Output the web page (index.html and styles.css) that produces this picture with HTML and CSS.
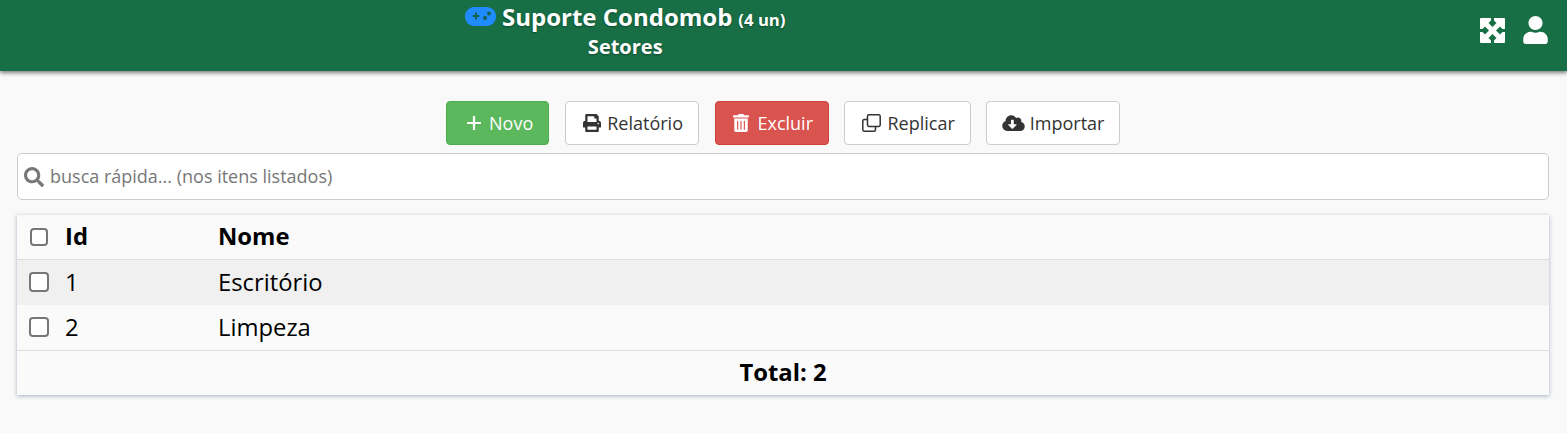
FILE: index.html
```html
<!DOCTYPE html>
<html lang="pt-BR">
<head>
<meta charset="utf-8">
<title>Setores</title>
<link rel="stylesheet" href="styles.css">
</head>
<body>
<header class="topbar">
  <div class="brand">
    <div class="brand-line">
      <svg class="pad" viewBox="0 0 31 19"><rect width="31" height="19" rx="9" fill="#1f8bff"/><path d="M7.600 8h2.400V5.500h2V8h2.400v2H12v2.500h-2V10H7.600z" fill="#17604c"/><circle cx="20" cy="11" r="2" fill="#17604c"/><circle cx="24" cy="6.500" r="2" fill="#17604c"/></svg>
      <span class="brand-name">Suporte Condomob</span>
      <span class="brand-unit">(4 un)</span>
    </div>
    <div class="brand-sub">Setores</div>
  </div>
  <div class="top-icons">
    <svg class="ico-expand" viewBox="0 0 25 25"><rect width="25" height="25" rx="1" fill="#fff"/><g fill="#186f46"><path d="M11 0h3v2.500l2.500 2.500-4 4-4-4L11 2.500z"/><path transform="rotate(90 12.500 12.500)" d="M11 0h3v2.500l2.500 2.500-4 4-4-4L11 2.500z"/><path transform="rotate(180 12.500 12.500)" d="M11 0h3v2.500l2.500 2.500-4 4-4-4L11 2.500z"/><path transform="rotate(270 12.500 12.500)" d="M11 0h3v2.500l2.500 2.500-4 4-4-4L11 2.500z"/></g></svg>
    <svg class="ico-user" viewBox="0 0 448 512"><path fill="#fff" d="M224 256c70.700 0 128-57.300 128-128S294.700 0 224 0 96 57.300 96 128s57.300 128 128 128zm89.600 32h-16.700c-22.200 10.200-46.900 16-72.900 16s-50.600-5.800-72.900-16h-16.700C60.200 288 0 348.200 0 422.400V464c0 26.500 21.500 48 48 48h352c26.500 0 48-21.500 48-48v-41.600c0-74.200-60.200-134.400-134.400-134.400z"/></svg>
  </div>
</header>

<main class="content">
  <div class="toolbar">
    <button class="btn btn-green" type="button">
      <svg class="ico ico-plus" viewBox="0 0 16 16"><path d="M8 1v14M1 8h14" stroke="#fff" stroke-width="2.200" fill="none"/></svg>Novo
    </button>
    <button class="btn btn-report" type="button">
      <svg class="ico" viewBox="0 0 512 512"><path fill="#333" d="M448 192V77.250c0-8.490-3.370-16.620-9.370-22.630L393.370 9.370c-6-6-14.140-9.370-22.630-9.370H96C78.330 0 64 14.330 64 32v160c-35.350 0-64 28.650-64 64v112c0 8.840 7.160 16 16 16h48v96c0 17.670 14.330 32 32 32h320c17.670 0 32-14.330 32-32v-96h48c8.840 0 16-7.160 16-16V256c0-35.350-28.650-64-64-64zm-64 256H128v-96h256v96zm0-224H128V64h192v48c0 8.840 7.160 16 16 16h48v96zm48 72c-13.250 0-24-10.750-24-24 0-13.270 10.750-24 24-24s24 10.730 24 24c0 13.250-10.750 24-24 24z"/></svg>Relatório
    </button>
    <button class="btn btn-red" type="button">
      <svg class="ico ico-trash" viewBox="0 0 448 512"><path fill="#fff" d="M32 464a48 48 0 0 0 48 48h288a48 48 0 0 0 48-48V128H32zm272-256a16 16 0 0 1 32 0v224a16 16 0 0 1-32 0zm-96 0a16 16 0 0 1 32 0v224a16 16 0 0 1-32 0zm-96 0a16 16 0 0 1 32 0v224a16 16 0 0 1-32 0zM432 32H312l-9.400-18.700A24 24 0 0 0 281.100 0H166.800a23.720 23.720 0 0 0-21.400 13.300L136 32H16A16 16 0 0 0 0 48v32a16 16 0 0 0 16 16h416a16 16 0 0 0 16-16V48a16 16 0 0 0-16-16z"/></svg>Excluir
    </button>
    <button class="btn btn-tight" type="button">
      <svg class="ico ico-copy" viewBox="0 0 19 18"><path fill="none" stroke="#333" stroke-width="1.500" d="M7 .8h9.700a1.500 1.500 0 0 1 1.500 1.500V11a1.500 1.500 0 0 1-1.500 1.500H7A1.500 1.500 0 0 1 5.500 11V2.300A1.500 1.500 0 0 1 7 .8z"/><path fill="none" stroke="#333" stroke-width="1.500" d="M5.500 5.500H2.300A1.500 1.500 0 0 0 .8 7v8.700a1.500 1.500 0 0 0 1.500 1.500H12a1.500 1.500 0 0 0 1.500-1.500v-3.200"/></svg>Replicar
    </button>
    <button class="btn btn-tight btn-import" type="button">
      <svg class="ico ico-cloud" viewBox="0 0 640 512"><path fill="#333" d="M537.600 226.600c4.100-10.700 6.400-22.400 6.400-34.600 0-53-43-96-96-96-19.700 0-38.100 6-53.300 16.200C367 64.200 315.300 32 256 32c-88.400 0-160 71.600-160 160 0 2.700.1 5.400.2 8.100C40.200 219.800 0 273.200 0 336c0 79.500 64.500 144 144 144h368c70.700 0 128-57.300 128-128 0-61.900-44-113.600-102.400-125.400zm-132.900 88.700L299.300 420.700c-6.200 6.200-16.400 6.200-22.600 0L171.300 315.300c-10.100-10.100-2.900-27.300 11.300-27.300H248V176c0-8.800 7.200-16 16-16h48c8.800 0 16 7.200 16 16v112h65.400c14.200 0 21.400 17.200 11.300 27.300z"/></svg>Importar
    </button>
  </div>

  <label class="search">
    <svg class="ico-search" viewBox="0 0 512 512"><path fill="#777" d="M505 442.700L405.300 343c-4.500-4.500-10.600-7-17-7H372c27.600-35.300 44-79.700 44-128C416 93.100 322.900 0 208 0S0 93.100 0 208s93.100 208 208 208c48.300 0 92.700-16.400 128-44v16.300c0 6.400 2.500 12.500 7 17l99.700 99.700c9.400 9.400 24.600 9.400 33.900 0l28.300-28.300c9.400-9.400 9.400-24.600.1-34zM208 336c-70.700 0-128-57.200-128-128 0-70.700 57.200-128 128-128 70.700 0 128 57.200 128 128 0 70.700-57.200 128-128 128z"/></svg>
    <input class="search-input" type="text" placeholder="busca rápida... (nos itens listados)">
  </label>

  <div class="card">
    <table class="grid">
      <colgroup><col class="col-check"><col class="col-id"><col></colgroup>
      <thead>
        <tr><th><input class="check check-head" type="checkbox"></th><th>Id</th><th>Nome</th></tr>
      </thead>
      <tbody>
        <tr class="odd"><td><input class="check" type="checkbox"></td><td>1</td><td>Escritório</td></tr>
        <tr><td><input class="check" type="checkbox"></td><td>2</td><td>Limpeza</td></tr>
      </tbody>
      <tfoot>
        <tr><td colspan="3">Total: 2</td></tr>
      </tfoot>
    </table>
  </div>
</main>
</body>
</html>
```
FILE: styles.css
```css
* { box-sizing: border-box; }

html, body { height: 100%; }

body {
  margin: 0;
  background: #f9f9f9;
  font-family: "Open Sans", "Noto Sans", sans-serif;
  color: #000;
  overflow: hidden;
}

.topbar {
  height: 71px;
  background: #186f46;
  box-shadow: 0 2px 4px rgba(0, 0, 0, 0.5);
  display: flex;
  align-items: flex-start;
  justify-content: space-between;
  padding: 0 19px 0 465px;
  color: #fff;
}

.brand {
  display: flex;
  flex-direction: column;
  align-items: center;
  text-shadow: 0 1px 2px rgba(0, 0, 0, 0.35);
}

.brand-line {
  display: flex;
  align-items: baseline;
  height: 35px;
}

.pad {
  width: 31px;
  height: 19px;
  margin-right: 6px;
  align-self: flex-start;
  margin-top: 7px;
}

.brand-name { font-size: 24px; font-weight: 700; line-height: 33px; }

.brand-unit { font-size: 16.700px; font-weight: 700; margin-left: 6px; }

.brand-sub { font-size: 20px; font-weight: 700; line-height: 24px; }

.top-icons {
  display: flex;
  align-items: flex-start;
  gap: 18px;
  padding-top: 16px;
}

.ico-expand { width: 25px; height: 25px; margin-top: 2px; }
.ico-user { width: 25px; height: 28px; }

.content { padding: 30px 18px 0 17px; }

.toolbar {
  display: flex;
  justify-content: center;
  gap: 16px;
  height: 44px;
}

.btn {
  height: 44px;
  padding: 0 15px 0 17px;
  display: flex;
  align-items: center;
  gap: 7px;
  font: 400 18px "Open Sans", sans-serif;
  color: #333;
  background: #fff;
  border: 1px solid #ccc;
  border-radius: 4px;
}

.btn-tight { margin-left: -1px; }
.btn-report { gap: 6.500px; }
.btn-import { padding: 0 14.500px 0 15px; gap: 5px; }

.btn-green { background: #5cb85c; border-color: #4cae4c; color: #fff; padding: 0 14.500px 0 19px; }
.btn-red { background: #d9534f; border-color: #d43f3a; color: #fff; padding-right: 14.500px; }

.ico { width: 18px; height: 18px; flex: none; }
.ico-plus { width: 16px; height: 16px; }
.ico-trash { width: 16px; margin-right: 1.500px; }
.ico-copy { width: 19px; }
.ico-cloud { width: 23px; }

.search {
  display: flex;
  align-items: center;
  height: 47px;
  margin-top: 8px;
  background: #fff;
  border: 1px solid #ccc;
  border-radius: 5px;
  padding-left: 6px;
}

.ico-search { width: 20px; height: 20px; flex: none; }

.search-input {
  flex: 1;
  min-width: 0;
  height: 100%;
  border: 0;
  outline: 0;
  background: transparent;
  padding: 0 0 2px 6px;
  font: 400 18px "Open Sans", sans-serif;
  color: #333;
}

.search-input::placeholder { color: #777; opacity: 1; }

.card {
  margin-top: 15px;
  background: #fafafa;
  box-shadow: 0 1px 4px rgba(60, 80, 120, 0.45);
}

.grid {
  width: 100%;
  table-layout: fixed;
  border-collapse: separate;
  border-spacing: 0;
  font-size: 23.800px;
}

.col-check { width: 48px; }
.col-id { width: 153px; }

.grid th, .grid td {
  height: 45px;
  padding: 0 0 2px;
  text-align: left;
  vertical-align: middle;
}

.grid th { font-weight: 700; border-bottom: 1px solid #ddd; }

.odd td { background: #f0f0f0; }

.grid tfoot td { text-align: center; font-weight: 700; border-top: 1px solid #ddd; }

.check {
  appearance: none;
  display: block;
  width: 20px;
  height: 20px;
  margin: 1px 0 0 12px;
  background: #fff;
  border: 2px solid #767676;
  border-radius: 4px;
}

.check-head { width: 18px; height: 18px; margin: 1px 0 0 13px; }
```
